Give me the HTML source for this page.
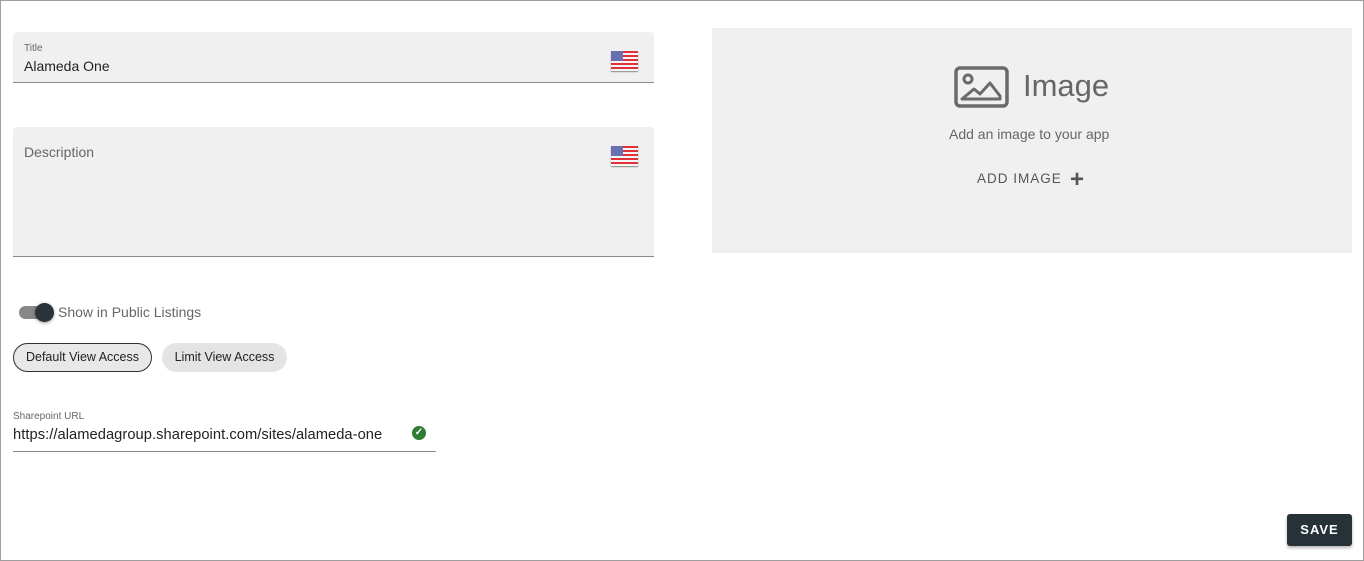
<!DOCTYPE html>
<html><head><style>
*{box-sizing:border-box;margin:0;padding:0}
body{width:1364px;height:561px;background:#fff;font-family:"Liberation Sans",sans-serif;position:relative;overflow:hidden}
.frame{position:absolute;left:0;top:0;width:1364px;height:561px;border:1px solid #9e9e9e}
.field{position:absolute;background:#f0f0f0;border-radius:4px 4px 0 0;border-bottom:1px solid #8a8a8a}
.flag{position:absolute;width:27px;height:20px;background:repeating-linear-gradient(#e0303a 0 2px,#f4f4f4 2px 4px);box-shadow:0 1px 1px #888}
.flag:before{content:"";position:absolute;left:0;top:0;width:12px;height:10px;background:#6870b0}
.abs{position:absolute;white-space:nowrap}
</style></head><body>
<div class="frame"></div>
<div class="field" style="left:13px;top:32px;width:641px;height:51px">
 <div class="abs" style="left:11px;top:11px;font-size:10px;color:#666">Title</div>
 <div class="abs" style="left:11px;top:26px;font-size:14px;color:#222">Alameda One</div>
 <div class="flag" style="left:598px;top:19px"></div>
</div>
<div class="field" style="left:13px;top:127px;width:641px;height:130px">
 <div class="abs" style="left:11px;top:17px;font-size:14px;color:#666">Description</div>
 <div class="flag" style="left:598px;top:19px"></div>
</div>
<div class="abs" style="left:19px;top:306px;width:34px;height:13px;border-radius:7px;background:#888"></div>
<div class="abs" style="left:35px;top:303px;width:19px;height:19px;border-radius:50%;background:#2b3238;box-shadow:0 1px 3px rgba(0,0,0,.4)"></div>
<div class="abs" style="left:58px;top:304px;font-size:14px;color:#666">Show in Public Listings</div>
<div class="abs" style="left:13px;top:343px;width:139px;height:29px;border:1px solid #333;border-radius:15px;background:#e8e8e8;font-size:12.5px;color:#222;text-align:center;line-height:27px">Default View Access</div>
<div class="abs" style="left:162px;top:343px;width:125px;height:29px;border-radius:15px;background:#e4e4e4;font-size:12.5px;color:#222;text-align:center;line-height:29px">Limit View Access</div>
<div class="abs" style="left:13px;top:411px;font-size:10px;color:#666">Sharepoint URL</div>
<div class="abs" style="left:13px;top:427px;font-size:14.7px;color:#222;letter-spacing:0.05px">https://alamedagroup.sharepoint.com/sites/alameda-one</div>
<div class="abs" style="left:412px;top:426px;width:14px;height:14px;border-radius:50%;background:#2e7d32;color:#fff;font-size:10px;text-align:center;line-height:14px;font-weight:bold">✓</div>
<div class="abs" style="left:13px;top:451px;width:423px;height:1px;background:#8a8a8a"></div>
<div class="abs" style="left:712px;top:28px;width:640px;height:225px;background:#f0f0f0">
 <svg class="abs" style="left:242px;top:38px" width="56" height="42" viewBox="0 0 56 42"><rect x="2" y="2" width="51" height="38" rx="4" fill="none" stroke="#6a6a6a" stroke-width="3.5"/><circle cx="14" cy="13" r="4" fill="none" stroke="#6a6a6a" stroke-width="3"/><path d="M8 33 L20 23 L26 28 L36 17 L46 30 L46 33 Z" fill="none" stroke="#6a6a6a" stroke-width="3" stroke-linejoin="round"/></svg>
 <div class="abs" style="left:311px;top:40px;font-size:31px;color:#666">Image</div>
 <div class="abs" style="left:237px;top:98px;font-size:14px;color:#666">Add an image to your app</div>
 <div class="abs" style="left:265px;top:143px;font-size:13.5px;color:#555;letter-spacing:1px">ADD IMAGE</div>
 <div class="abs" style="left:358px;top:140px;font-size:24px;color:#555;font-weight:bold;line-height:24px">+</div>
</div>
<div class="abs" style="left:1287px;top:514px;width:65px;height:32px;background:#263238;border-radius:3px;color:#fff;font-size:13px;font-weight:bold;text-align:center;line-height:32px;letter-spacing:1px;box-shadow:0 2px 3px rgba(0,0,0,.3)">SAVE</div>
</body></html>
